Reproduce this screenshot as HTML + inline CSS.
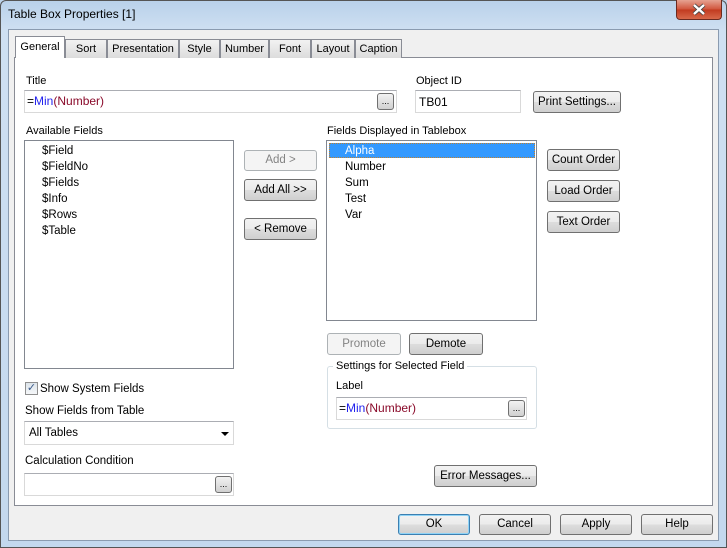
<!DOCTYPE html>
<html><head><style>
*{box-sizing:border-box;margin:0;padding:0}
body{width:727px;height:548px;overflow:hidden;background:#bcd3eb;font-family:"Liberation Sans",sans-serif;font-size:11px;color:#000;position:relative}
.a{position:absolute}
.frame{left:0;top:0;width:727px;height:548px;background:linear-gradient(180deg,#b9d1ea 0,#cfe0f2 30px,#c3d8ee 100%);border:1px solid #555;border-radius:6px 6px 0 0}
.client{left:8px;top:29px;width:711px;height:512px;background:#f0f0f0;border:1px solid #8a9bb0}
.panel{left:14px;top:57px;width:699px;height:449px;background:#fff;border:1px solid #898c95}
.tab{top:39px;height:19px;border:1px solid #898c95;border-bottom:none;background:linear-gradient(#f2f2f2,#dcdcdc);text-align:center;line-height:18px;font-size:11px}
.tab.sel{top:36px;height:22px;background:#fff;z-index:2;line-height:20px}
.btn{border:1px solid #707070;border-radius:3px;background:linear-gradient(#f2f2f2 0,#ebebeb 50%,#dddddd 51%,#cfcfcf 100%);text-align:center;font-size:11.5px}
.dis{border-color:#adb2b5;background:#f4f4f4;color:#838383}
.inp{background:#fff;border:1px solid #d9d9d9;border-top-color:#abadb3}
.list{background:#fff;border:1px solid #828790}
.dots{width:17px;height:17px;border:1px solid #707070;border-radius:3px;background:linear-gradient(#f2f2f2,#d0d0d0);font-size:9px;text-align:center;line-height:15px}
.b{color:#2222ee}.r{color:#8a0a2a}
</style></head><body>
<div class="a frame"></div>
<div class="a" style="left:8px;top:7px;font-size:12px">Table Box Properties [1]</div>
<div class="a" style="left:676px;top:0;width:46px;height:20px;border:1px solid #6b2a20;border-top:none;border-radius:0 0 4px 4px;background:linear-gradient(#e6a392,#d0533a 50%,#c13a1f 51%,#d8684a)">
<svg width="44" height="19" style="position:absolute;left:0;top:0"><path d="M17 5 L27 14 M27 5 L17 14" stroke="#444" stroke-width="4"/><path d="M17 5 L27 14 M27 5 L17 14" stroke="#fff" stroke-width="2.4"/></svg></div>
<div class="a client"></div>
<div class="a panel"></div>
<div class="a tab sel" style="left:15px;width:50px">General</div>
<div class="a tab" style="left:65px;width:42px">Sort</div>
<div class="a tab" style="left:107px;width:72px">Presentation</div>
<div class="a tab" style="left:179px;width:41px">Style</div>
<div class="a tab" style="left:220px;width:49px">Number</div>
<div class="a tab" style="left:269px;width:42px">Font</div>
<div class="a tab" style="left:311px;width:44px">Layout</div>
<div class="a tab" style="left:355px;width:47px">Caption</div>

<div class="a" style="left:26px;top:75px">Title</div>
<div class="a inp" style="left:24px;top:90px;width:373px;height:23px;padding:3px 2px;font-size:12px">=<span class="b">Min</span><span class="r">(Number)</span></div>
<div class="a dots" style="left:377px;top:93px">...</div>
<div class="a" style="left:416px;top:75px">Object ID</div>
<div class="a inp" style="left:415px;top:90px;width:106px;height:23px;padding:4px 3px;font-size:12px">TB01</div>
<div class="a btn" style="left:533px;top:91px;width:88px;height:22px;line-height:20px">Print Settings...</div>

<div class="a" style="left:26px;top:125px">Available Fields</div>
<div class="a list" style="left:24px;top:140px;width:210px;height:229px"></div>
<div class="a" style="left:42px;top:143px;line-height:16px;font-size:11.5px">$Field<br>$FieldNo<br>$Fields<br>$Info<br>$Rows<br>$Table</div>

<div class="a btn dis" style="left:244px;top:150px;width:73px;height:21px;line-height:19px">Add &gt;</div>
<div class="a btn" style="left:244px;top:179px;width:73px;height:22px;line-height:20px">Add All &gt;&gt;</div>
<div class="a btn" style="left:244px;top:218px;width:73px;height:22px;line-height:20px">&lt; Remove</div>

<div class="a" style="left:327px;top:125px">Fields Displayed in Tablebox</div>
<div class="a list" style="left:326px;top:140px;width:211px;height:181px"></div>
<div class="a" style="left:329px;top:143px;width:206px;height:15px;background:#3399ff;border:1px dotted #c08030"></div>
<div class="a" style="left:345px;top:143px;line-height:16px;font-size:11.5px"><span style="color:#fff">Alpha</span><br>Number<br>Sum<br>Test<br>Var</div>

<div class="a btn" style="left:547px;top:149px;width:73px;height:22px;line-height:20px">Count Order</div>
<div class="a btn" style="left:547px;top:180px;width:73px;height:22px;line-height:20px">Load Order</div>
<div class="a btn" style="left:547px;top:211px;width:73px;height:22px;line-height:20px">Text Order</div>

<div class="a btn dis" style="left:327px;top:333px;width:74px;height:22px;line-height:20px">Promote</div>
<div class="a btn" style="left:409px;top:333px;width:74px;height:22px;line-height:20px">Demote</div>

<div class="a" style="left:327px;top:366px;width:210px;height:63px;border:1px solid #d5dfe5;border-radius:3px"></div>
<div class="a" style="left:333px;top:360px;background:#fff;padding:0 3px">Settings for Selected Field</div>
<div class="a" style="left:336px;top:380px">Label</div>
<div class="a inp" style="left:336px;top:397px;width:191px;height:23px;padding:3px 2px;font-size:12px">=<span class="b">Min</span><span class="r">(Number)</span></div>
<div class="a dots" style="left:508px;top:400px">...</div>

<div class="a" style="left:25px;top:382px;width:13px;height:13px;border:1px solid #8f8f8f;background:linear-gradient(#dde4ea,#f5f7f9);color:#3a5a8a;font-size:11px;line-height:11px;text-align:center">✓</div>
<div class="a" style="left:40px;top:383px;font-size:11.5px">Show System Fields</div>
<div class="a" style="left:25px;top:405px;font-size:11.5px">Show Fields from Table</div>
<div class="a inp" style="left:24px;top:421px;width:210px;height:24px;padding:5px 4px;font-size:11.5px">All Tables</div>
<div class="a" style="left:221px;top:432px;border-left:4px solid transparent;border-right:4px solid transparent;border-top:4px solid #000"></div>
<div class="a" style="left:25px;top:455px;font-size:11.5px">Calculation Condition</div>
<div class="a inp" style="left:24px;top:473px;width:210px;height:23px"></div>
<div class="a dots" style="left:215px;top:476px">...</div>
<div class="a btn" style="left:434px;top:465px;width:103px;height:22px;line-height:20px">Error Messages...</div>

<div class="a btn" style="left:398px;top:514px;width:72px;height:21px;line-height:19px;border-color:#3c7fb1;box-shadow:inset 0 0 0 1px #8fd3f6">OK</div>
<div class="a btn" style="left:479px;top:514px;width:72px;height:21px;line-height:19px">Cancel</div>
<div class="a btn" style="left:560px;top:514px;width:72px;height:21px;line-height:19px">Apply</div>
<div class="a btn" style="left:641px;top:514px;width:72px;height:21px;line-height:19px">Help</div>
</body></html>
